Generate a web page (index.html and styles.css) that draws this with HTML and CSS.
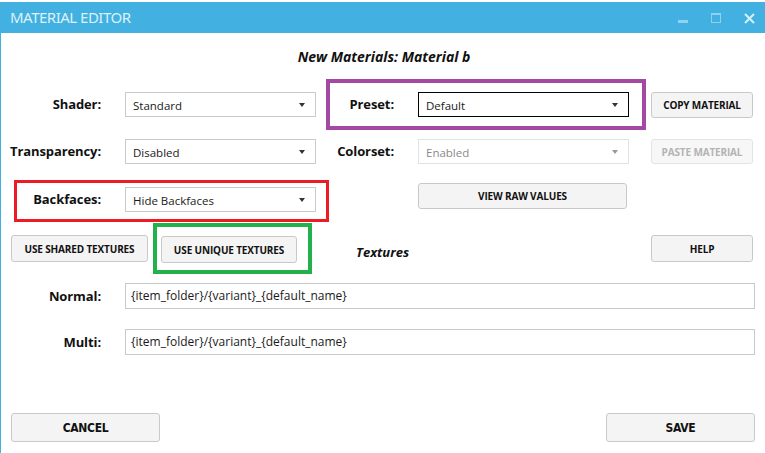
FILE: index.html
```html
<!DOCTYPE html>
<html>
<head>
<meta charset="utf-8">
<link rel="stylesheet" href="styles.css">
</head>
<body>
<div class="strip"></div>
<div class="window">
  <div class="titlebar">
    <span class="title">MATERIAL EDITOR</span>
    <div class="controls">
      <svg class="ctl" width="11" height="11" viewBox="0 0 11 11"><rect x="0" y="7" width="10" height="3" fill="#8ed2ef"/></svg>
      <svg class="ctl" width="11" height="11" viewBox="0 0 11 11"><rect x="0.5" y="0.5" width="9" height="9" fill="none" stroke="#8ed2ef" stroke-width="1"/><rect x="0" y="0" width="10" height="2" fill="#8ed2ef"/></svg>
      <svg class="ctl" width="11" height="11" viewBox="0 0 11 11"><path d="M1 1 L10 10 M10 1 L1 10" stroke="#d6eff9" stroke-width="2"/></svg>
    </div>
  </div>
  <div class="content">
    <h1 class="heading">New Materials: Material b</h1>

    <div class="row r1">
      <span class="lbl w100">Shader:</span>
      <div class="select sel-left">Standard<i class="arrow"></i></div>
      <div class="hl purple">
        <span class="lbl w64">Preset:</span>
        <div class="select sel-right focus">Default<i class="arrow"></i></div>
      </div>
      <button class="btn btn-side copy">COPY MATERIAL</button>
    </div>

    <div class="row r2">
      <span class="lbl w100">Transparency:</span>
      <div class="select sel-left">Disabled<i class="arrow"></i></div>
      <span class="lbl w64 colorset">Colorset:</span>
      <div class="select sel-right disabled">Enabled<i class="arrow"></i></div>
      <button class="btn btn-side paste" disabled>PASTE MATERIAL</button>
    </div>

    <div class="row r3">
      <div class="hl red">
        <span class="lbl w84">Backfaces:</span>
        <div class="select sel-left">Hide Backfaces<i class="arrow"></i></div>
      </div>
      <button class="btn raw">VIEW RAW VALUES</button>
    </div>

    <div class="row r4">
      <button class="btn shared">USE SHARED TEXTURES</button>
      <div class="hl green">
        <button class="btn unique">USE UNIQUE TEXTURES</button>
      </div>
      <span class="subhead">Textures</span>
      <button class="btn btn-side help">HELP</button>
    </div>

    <div class="row r5">
      <span class="lbl w100">Normal:</span>
      <div class="input">{item_folder}/{variant}_{default_name}</div>
    </div>

    <div class="row r6">
      <span class="lbl w100">Multi:</span>
      <div class="input">{item_folder}/{variant}_{default_name}</div>
    </div>

    <div class="row footer">
      <button class="btn big cancel">CANCEL</button>
      <button class="btn big save">SAVE</button>
    </div>
  </div>
</div>
</body>
</html>
```

FILE: styles.css
```css
* { box-sizing: border-box; }

html, body {
  margin: 0;
  padding: 0;
  background: #ffffff;
  width: 765px;
  height: 453px;
  overflow: hidden;
  font-family: "Open Sans", "Noto Sans", sans-serif;
  color: #111;
}

.strip {
  height: 2px;
  background: #ffffff;
}

.window {
  border-left: 1px solid #42b0e0;
  height: 451px;
}

.titlebar {
  height: 31px;
  background: #42b0e0;
  display: flex;
  align-items: flex-start;
  margin-left: -1px;
}

.title {
  color: #dcf2fb;
  font-family: "Noto Sans", "Open Sans", sans-serif;
  font-size: 15px;
  font-weight: 400;
  line-height: 31px;
  padding-left: 10px;
  letter-spacing: -0.5px;
}

.controls {
  margin-left: auto;
  display: flex;
  padding-top: 11px;
  margin-right: 10px;
}

.ctl { display: block; }
.ctl + .ctl { margin-left: 22px; }

.content {
  display: flex;
  flex-direction: column;
}

.heading {
  margin: 14px 0 0 0;
  height: 20px;
  line-height: 20px;
  text-align: center;
  font-size: 14px;
  font-weight: 700;
  font-style: italic;
  padding-left: 2px;
}

.row {
  display: flex;
  align-items: center;
}

.r1 { margin-top: 12px; height: 51px; }
.r2 { margin-top: 9px; height: 25px; }
.r3 { margin-top: 16px; height: 42px; align-items: flex-start; }
.r4 { margin-top: 1px; height: 51px; }
.r5 { margin-top: 9px; height: 26px; }
.r6 { margin-top: 20px; height: 26px; }
.footer { margin-top: 58px; height: 29px; justify-content: space-between; padding: 0 10px 0 10px; }

.lbl {
  font-size: 13px;
  font-weight: 700;
  text-align: right;
  white-space: nowrap;
  flex: none;
  line-height: 25px;
  letter-spacing: -0.1px;
}
.w100 { width: 100px; }
.w64 { width: 64px; }
.w84 { width: 84px; }

.select {
  position: relative;
  height: 25px;
  border: 1px solid #cacaca;
  background: #fff;
  font-size: 11.5px;
  line-height: 24px;
  padding-top: 1px;
  padding-left: 7px;
  color: #1a1a1a;
  flex: none;
}
.sel-left { width: 191px; margin-left: 24px; }
.sel-right { width: 211px; margin-left: 24px; }
.select.focus { border-color: #000; }
.select.disabled { border-color: #e2e2e2; color: #8a8a8a; }

.arrow {
  position: absolute;
  right: 10px;
  top: 10px;
  width: 0;
  height: 0;
  border-left: 3.5px solid transparent;
  border-right: 3.5px solid transparent;
  border-top: 4px solid #333;
}
.disabled .arrow { border-top-color: #999; }

.hl {
  display: flex;
  align-items: center;
  flex: none;
}
.purple {
  margin-left: 10px;
  width: 320px;
  height: 51px;
  border: 4px solid #a349a4;
}
.red {
  margin-left: 13px;
  width: 315px;
  height: 42px;
  border: 3px solid #ed1c24;
  align-items: flex-start;
  padding-top: 4px;
}
.green {
  margin-left: 5px;
  width: 159px;
  height: 51px;
  border: 4px solid #22b14c;
  padding-left: 4px;
  padding-top: 2px;
}

.btn {
  font-family: "Open Sans", "Noto Sans", sans-serif;
  font-size: 10px;
  font-weight: 700;
  color: #111;
  background: #f4f4f4;
  border: 1px solid #c9c9c9;
  border-radius: 3px;
  padding: 0;
  flex: none;
  white-space: nowrap;
  letter-spacing: -0.15px;
}
.btn:disabled { color: #b3b3b3; border-color: #e3e3e3; background: #f7f7f7; }

.btn-side { width: 102px; }
.copy { margin-left: 5px; height: 26px; }
.paste { margin-left: 22px; height: 25px; }
.colorset { margin-left: 14px; }
.raw { margin-left: 89px; width: 209px; height: 26px; margin-top: 3px; }
.shared { margin-left: 10px; width: 137px; height: 27px; }
.unique { width: 136px; height: 27px; }
.subhead {
  margin-left: 44px;
  font-size: 13px;
  font-weight: 700;
  font-style: italic;
  padding-top: 6px;
}
.help { margin-left: auto; margin-right: 12px; height: 27px; }

.input {
  margin-left: 24px;
  width: 630px;
  height: 26px;
  border: 1px solid #cacaca;
  font-size: 12px;
  line-height: 24px;
  padding-left: 5px;
  color: #1a1a1a;
}

.big {
  width: 149px;
  height: 29px;
  font-size: 12px;
  font-family: "DejaVu Sans", sans-serif;
  font-stretch: condensed;
  letter-spacing: -0.3px;
}
```
